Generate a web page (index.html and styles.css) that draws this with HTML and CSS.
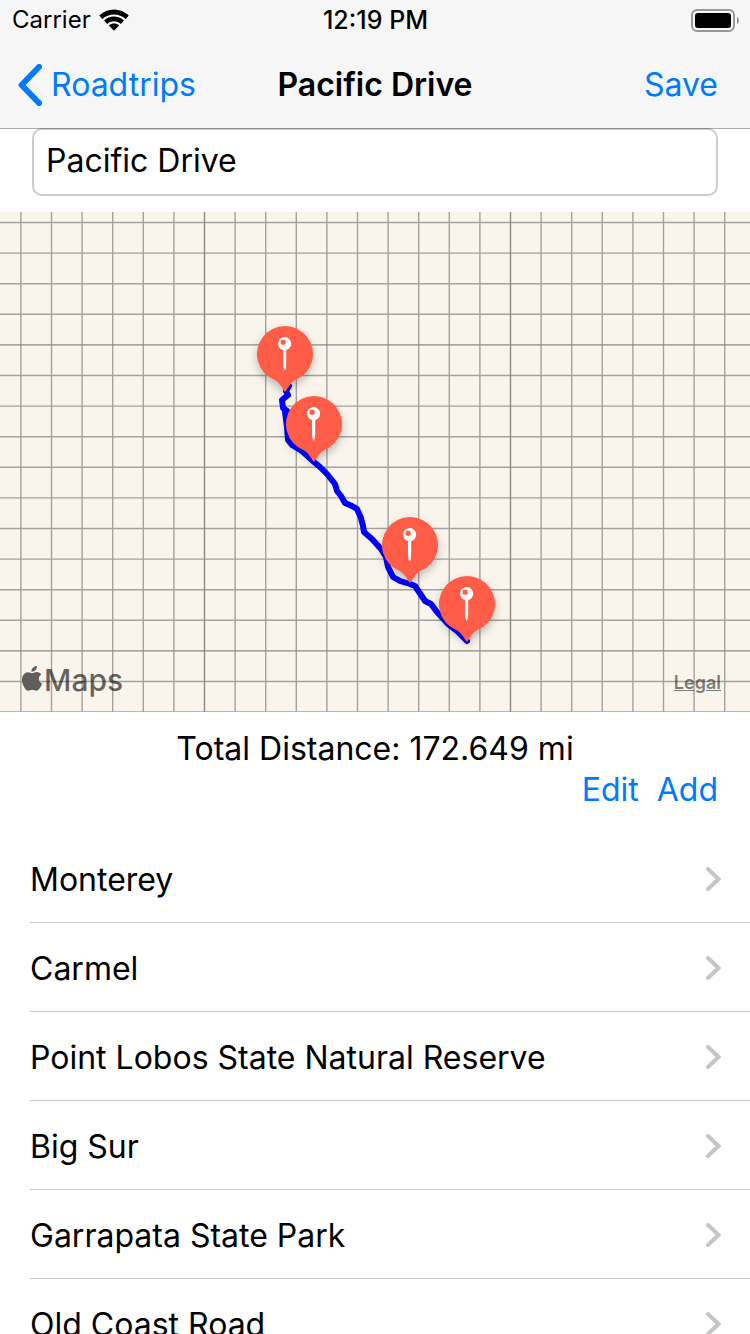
FILE: index.html
```html
<!DOCTYPE html>
<html lang="en">
<head>
<meta charset="utf-8">
<meta name="viewport" content="width=device-width, initial-scale=1">
<title>Pacific Drive</title>
<link rel="stylesheet" href="styles.css">
</head>
<body>
<div class="app">
  <header class="top">
    <div class="status">
      <div class="status-left">
        <span>Carrier</span>
        <svg class="wifi" viewBox="0 0 30 22" aria-hidden="true">
          <path d="M0.2 6.6C8.5-1.5 21.5-1.5 29.8 6.6L26.6 10.1C20.3 3.9 9.7 3.9 3.4 10.1Z"/>
          <path d="M5 11.6C10.6 6.2 19.4 6.2 25 11.6L21.8 15C18.1 11.4 11.9 11.4 8.2 15Z"/>
          <path d="M9.9 16.5C12.8 13.9 17.2 13.9 20.1 16.5L15 21.8Z"/>
        </svg>
      </div>
      <time class="clock">12:19 PM</time>
      <div class="status-right">
        <svg class="battery" viewBox="0 0 48 23" aria-hidden="true">
          <rect x="1" y="1" width="42" height="21" rx="5" fill="none" stroke="#999" stroke-width="2"/>
          <rect x="4" y="4" width="36" height="15" rx="3"/>
          <path d="M46 8C48.4 9 48.4 14 46 15Z" fill="#888"/>
        </svg>
      </div>
    </div>
    <nav class="nav">
      <a class="back" href="#">
        <svg class="back-icon" viewBox="0 0 24 42" aria-hidden="true"><path d="M21 3L3.6 21L21 39"/></svg>
        <span>Roadtrips</span>
      </a>
      <h1 class="title">Pacific Drive</h1>
      <button class="link save" type="button">Save</button>
    </nav>
  </header>

  <main class="content">
    <div class="field-row">
      <input class="field" type="text" value="Pacific Drive" aria-label="Roadtrip name">
    </div>

    <section class="map" aria-label="Route map">
      <svg class="map-canvas" viewBox="0 212 750 500" aria-hidden="true">
        <defs>
          <filter id="shade" x="-30%" y="-30%" width="160%" height="160%">
            <feDropShadow dx="0" dy="4" stdDeviation="4" flood-opacity=".25"/>
          </filter>
          <g id="pin">
            <path filter="url(#shade)" fill="#ff5d47" d="M0 37.5C-1.5 37.5-3 31-10 26.2A28 28 0 1 1 10 26.2C3 31 1.5 37.5 0 37.5Z"/>
            <circle cx="-0.4" cy="-10.3" r="6.6" fill="#fff"/>
            <rect x="-4.4" y="-14.3" width="5" height="5" rx="1.4" fill="#ff5d47"/>
            <path d="M-2-4.5H1.2V10Q0.8 15.5 -0.4 17Q-1.8 15-2 10Z" fill="#fff"/>
          </g>
        </defs>
        <path class="grid" d="M20.9 212v500M51.5 212v500M82.1 212v500M112.7 212v500M143.3 212v500M173.9 212v500M235.1 212v500M265.7 212v500M296.3 212v500M326.9 212v500M357.5 212v500M388.1 212v500M418.7 212v500M449.3 212v500M479.9 212v500M541.1 212v500M571.7 212v500M602.3 212v500M632.9 212v500M663.5 212v500M694.1 212v500M724.7 212v500M0 222.5h750M0 253.1h750M0 283.7h750M0 314.3h750M0 375.5h750M0 406.1h750M0 436.7h750M0 467.3h750M0 497.9h750M0 528.5h750M0 559.1h750M0 589.7h750M0 620.3h750M0 681.5h750M0 712h750"/>
        <path class="grid grid-major" d="M204.5 212v500M510.5 212v500M0 344.9h750M0 650.9h750"/>
        <path class="route" d="M289 386L286 391L288 395L282 400L283 408L287 411L285 412L287 427L288 440L292 445L302 451L314 462L320 467L327 474L335 484L337 491L341 496L345 503L352 506L357 509L361 518L363 526L364 532L372 539L381 549L386 557L388 567L393 577L400 581L410 584L415 586L425 601L431 604L437 612L448 624L458 632L467 641"/>
        <use href="#pin" x="285" y="354"/>
        <use href="#pin" x="314" y="424"/>
        <use href="#pin" x="410" y="545"/>
        <use href="#pin" x="467" y="604"/>
      </svg>
      <div class="map-footer">
        <div class="brand">
          <svg class="apple" viewBox="0 0 20 25" aria-hidden="true">
            <path d="M14.9 0C15.4 3 12.4 5.9 9.4 5.7C9.2 2.6 11.8 0.2 14.9 0Z"/>
            <path d="M10 7.2C11.2 7.2 12.6 5.9 14.7 5.9C16.7 5.9 18.4 7 19.3 8.5C15.8 10.6 16.2 15.8 20 17.4C19 20.6 16.8 24.7 14.4 24.7C12.8 24.7 12 23.7 10.3 23.7C8.6 23.7 7.7 24.7 6.2 24.7C3.4 24.7 0 18.7 0 13.8C0 9 2.9 6.2 6 6.2C7.8 6.2 9 7.2 10 7.2Z"/>
          </svg>
          <span>Maps</span>
        </div>
        <a class="legal" href="#">Legal</a>
      </div>
    </section>

    <p class="distance">Total Distance: 172.649 mi</p>
    <div class="actions">
      <button class="link" type="button">Edit</button>
      <button class="link" type="button">Add</button>
    </div>

    <ul class="stops">
      <li><a class="stop" href="#"><span>Monterey</span><svg class="chevron" viewBox="0 0 15 24" aria-hidden="true"><path d="M2 2L12.5 12L2 22"/></svg></a></li>
      <li><a class="stop" href="#"><span>Carmel</span><svg class="chevron" viewBox="0 0 15 24" aria-hidden="true"><path d="M2 2L12.5 12L2 22"/></svg></a></li>
      <li><a class="stop" href="#"><span>Point Lobos State Natural Reserve</span><svg class="chevron" viewBox="0 0 15 24" aria-hidden="true"><path d="M2 2L12.5 12L2 22"/></svg></a></li>
      <li><a class="stop" href="#"><span>Big Sur</span><svg class="chevron" viewBox="0 0 15 24" aria-hidden="true"><path d="M2 2L12.5 12L2 22"/></svg></a></li>
      <li><a class="stop" href="#"><span>Garrapata State Park</span><svg class="chevron" viewBox="0 0 15 24" aria-hidden="true"><path d="M2 2L12.5 12L2 22"/></svg></a></li>
      <li><a class="stop" href="#"><span>Old Coast Road</span><svg class="chevron" viewBox="0 0 15 24" aria-hidden="true"><path d="M2 2L12.5 12L2 22"/></svg></a></li>
    </ul>
  </main>
</div>
</body>
</html>
```
FILE: styles.css
```css
* { box-sizing: border-box; }

body {
  margin: 0;
  background: #fff;
  color: #000;
  font: 400 32px/40px Inter, "Liberation Sans", sans-serif;
}

a { color: inherit; text-decoration: none; }
svg { display: block; }

.app {
  display: flex;
  flex-direction: column;
  height: 100vh;
}

.top {
  position: relative;
  z-index: 1;
  background: #f6f6f6;
  box-shadow: 0 1px 0 rgba(0, 0, 0, .32);
}

.status {
  display: grid;
  grid-template-columns: 1fr auto 1fr;
  align-items: center;
  height: 40px;
  padding: 0 11px 0 12px;
  font-size: 24px;
}

.status-left {
  display: flex;
  align-items: center;
  gap: 8px;
}

.wifi { width: 30px; height: 22px; }

.clock {
  font-size: 25px;
  font-weight: 500;
}

.status-right { justify-self: end; }
.battery { width: 48px; height: 23px; }

.nav {
  display: grid;
  grid-template-columns: 1fr auto 1fr;
  align-items: center;
  height: 88px;
  padding: 2px 18px 0;
}

.back {
  display: flex;
  align-items: center;
  gap: 9px;
  color: #007aff;
}

.back-icon {
  width: 24px;
  height: 42px;
  fill: none;
  stroke: #007aff;
  stroke-width: 6;
  stroke-linecap: round;
  stroke-linejoin: round;
}

.title {
  margin: 0;
  font-size: 32px;
  font-weight: 600;
}

.link {
  padding: 0;
  border: 0;
  background: none;
  color: #007aff;
  font: inherit;
  cursor: pointer;
}

.save {
  justify-self: end;
  margin-right: 14px;
}

.content {
  flex: 1;
  min-height: 0;
  overflow-y: auto;
  scrollbar-width: none;
}

.field-row { padding: 0 32px 16px; }

.field {
  display: block;
  width: 100%;
  height: 68px;
  padding: 0 12px 4px;
  border: 2px solid #ccc;
  border-radius: 10px;
  background: #fff;
  color: #000;
  font: inherit;
}

.map {
  display: grid;
  background: #f9f5ed;
}

.map-canvas,
.map-footer { grid-area: 1 / 1; }

.map-canvas { width: 100%; }

.grid {
  fill: none;
  stroke: #a3a29d;
  stroke-width: 1.4;
}

.grid-major { stroke: #8b8a86; }

.route {
  fill: none;
  stroke: #00f;
  stroke-width: 6;
  stroke-linejoin: round;
  stroke-linecap: round;
}

.map-footer {
  display: flex;
  align-items: flex-end;
  justify-content: space-between;
  align-self: end;
  padding: 0 29px 12px 22px;
  color: rgba(0, 0, 0, .6);
}

.brand {
  display: flex;
  align-items: center;
  gap: 2px;
  font-size: 30px;
  font-weight: 500;
}

.apple {
  width: 20px;
  height: 25px;
  margin-bottom: 4px;
  fill: #5f5e5b;
}

.legal {
  color: rgba(0, 0, 0, .5);
  font-size: 18px;
  line-height: 34px;
  font-weight: 600;
  text-decoration: underline;
}

.distance {
  margin: 17px 0 0;
  text-align: center;
}

.actions {
  display: flex;
  justify-content: flex-end;
  gap: 18px;
  padding: 1px 32px 24px;
}

.stops {
  margin: 0;
  padding: 0 0 0 30px;
  list-style: none;
}

.stop {
  display: flex;
  align-items: center;
  justify-content: space-between;
  height: 89px;
  padding: 2px 29px 0 0;
  border-bottom: 1px solid #c6c6c8;
}

.stop span { padding-top: 2px; }

.chevron {
  width: 15px;
  height: 24px;
  fill: none;
  stroke: #c5c5c7;
  stroke-width: 4;
  stroke-linecap: round;
}
```
